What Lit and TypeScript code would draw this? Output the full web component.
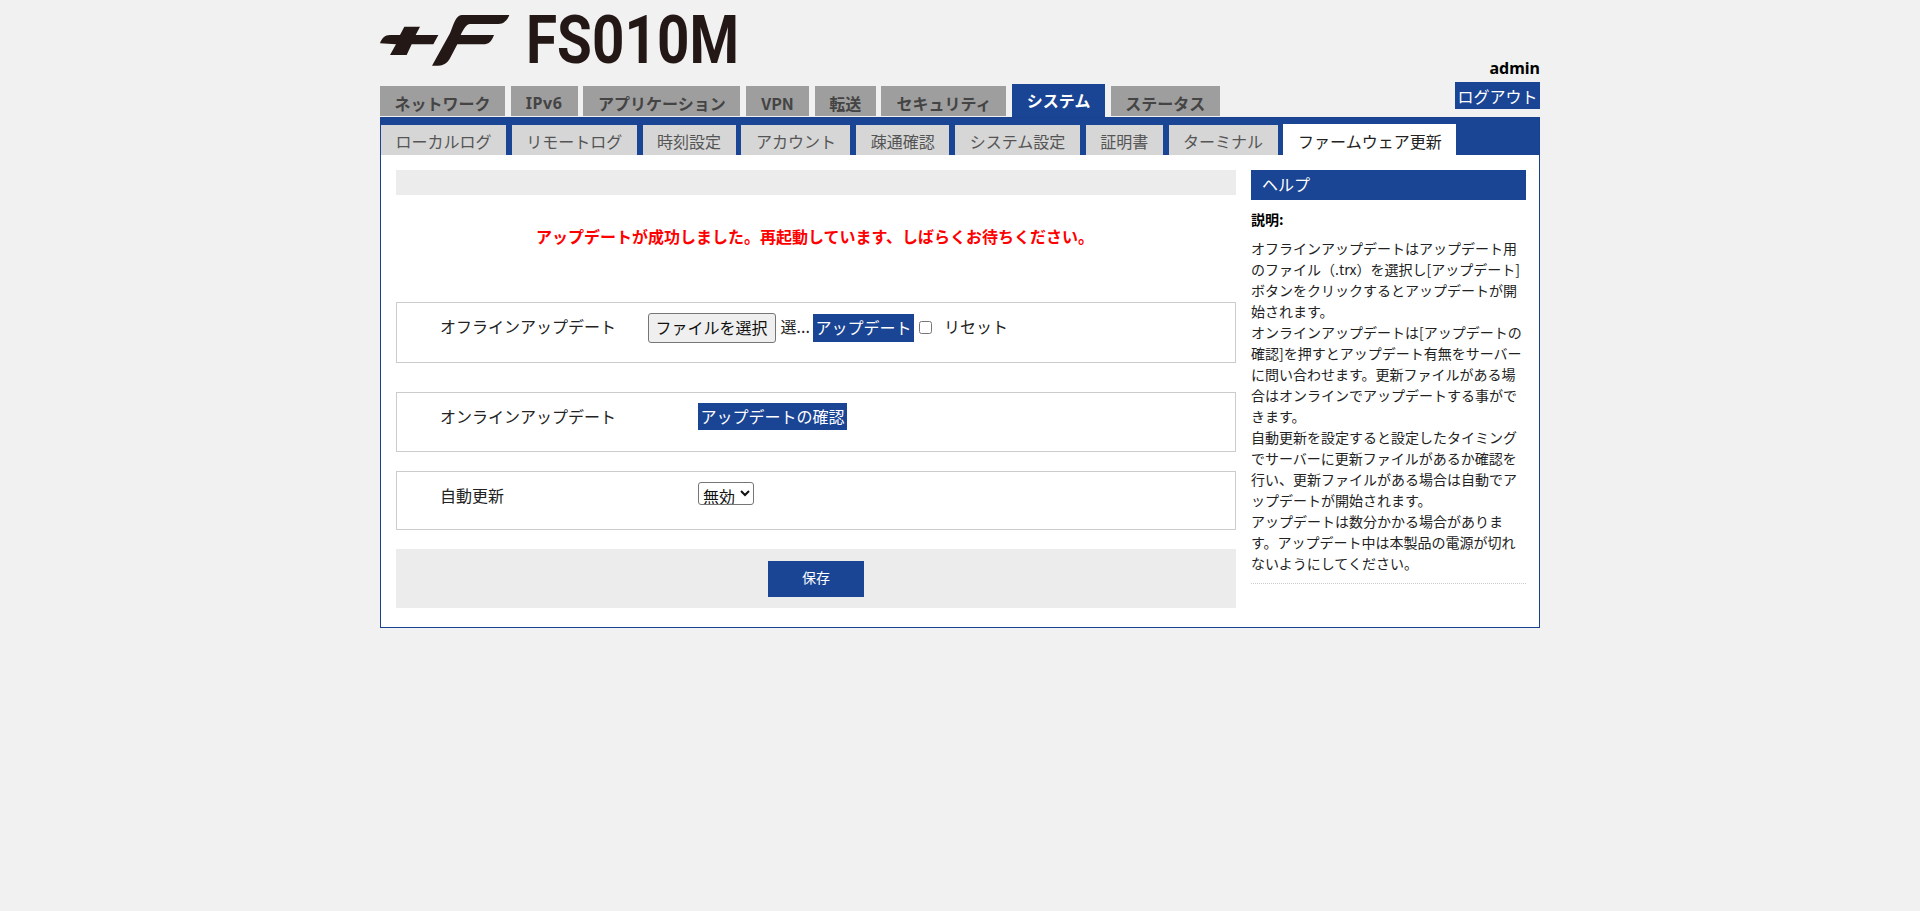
import { LitElement, html, css } from "lit";
import { customElement } from "lit/decorators.js";

const MAIN = [
  { t: "ネットワーク", w: 125 },
  { t: "IPv6", w: 67, latin: true },
  { t: "アプリケーション", w: 157 },
  { t: "VPN", w: 63 },
  { t: "転送", w: 61 },
  { t: "セキュリティ", w: 125 },
  { t: "システム", w: 93, active: true },
  { t: "ステータス", w: 109 },
];
const SUB = [
  { t: "ローカルログ", w: 125 },
  { t: "リモートログ", w: 125 },
  { t: "時刻設定", w: 93 },
  { t: "アカウント", w: 109 },
  { t: "疎通確認", w: 93 },
  { t: "システム設定", w: 125 },
  { t: "証明書", w: 77 },
  { t: "ターミナル", w: 109 },
  { t: "ファームウェア更新", w: 173, active: true },
];

@customElement("app-root")
export class AppRoot extends LitElement {
  static styles = css`
    :host {
      display: block;
      min-height: 911px;
      background: #f1f1f1;
      font-family: "Noto Sans CJK JP", "Noto Sans", sans-serif;
      font-size: 16px;
      color: #222;
    }
    * { box-sizing: border-box; }
    .page { width: 1160px; margin: 0 auto; }
    .top { display: flex; justify-content: space-between; align-items: flex-start; height: 117px; }
    .brand { height: 84px; }
    .logo { display: flex; align-items: flex-start; padding-top: 15px; height: 84px; }
    .logo svg { display: block; width: 130px; height: 52px; }
    .model {
      font-family: "Roboto", sans-serif;
      font-weight: 700;
      font-size: 67px;
      line-height: 49px;
      height: 49px;
      color: #231815;
      margin-left: 16px;
      transform: scaleX(0.845);
      transform-origin: left center;
      padding-top: 1px;
    }
    .user { display: flex; flex-direction: column; align-items: flex-end; padding-top: 57px; }
    .admin { font-family: "Noto Sans", sans-serif; font-weight: 700; font-size: 16px; line-height: 22px; color: #000; }
    .logout { height: 27px; width: 85px; margin-top: 3px; padding-bottom: 3px; }
    .btn {
      background: #1a4494;
      color: #fff;
      border: 0;
      padding: 0;
      font: inherit;
      display: inline-flex;
      align-items: center;
      justify-content: center;
      line-height: 1;
    }
    .main-tabs { display: flex; gap: 5.7px; align-items: flex-start; height: 33px; }
    .main-tab {
      height: 30px;
      margin-top: 2px;
      background: #9e9e9e;
      color: #444;
      font-weight: 700;
      display: flex;
      align-items: center;
      justify-content: center;
      padding-top: 3px;
    }
    .main-tab.latin { font-family: "Noto Sans", sans-serif; letter-spacing: 0.6px; }
    .main-tab.active { height: 33px; margin-top: 0; background: #1a4494; color: #fff; padding-top: 0; padding-bottom: 2px; }
    .panel { border: 1px solid #1a4090; background: #fff; height: 511px; }
    .sub-tabs { display: flex; gap: 5.8px; align-items: flex-end; height: 37px; background: #1a4494; }
    .sub-tab {
      height: 30px;
      background: #d6d6d6;
      color: #555;
      display: flex;
      align-items: center;
      justify-content: center;
      padding-top: 2px;
    }
    .sub-tab.active { height: 31px; background: #fff; color: #222; }
    .body { display: flex; padding: 15px 0 0 15px; gap: 15px; }
    .left { width: 840px; }
    .right { width: 275px; }
    .bar { height: 25px; background: #ececec; }
    .msg { color: #f00; font-weight: 700; text-align: center; line-height: 24px; margin-top: 29px; height: 78px; padding-right: 2px; }
    .box { border: 1px solid #ccc; height: 61px; padding: 10px 0 0 43px; display: flex; align-items: flex-start; }
    .box.online { margin-top: 29px; height: 60px; }
    .box.auto { margin-top: 19px; height: 59px; }
    .label { width: 207.5px; line-height: 26px; flex: none; }
    .box.online .label { width: 258px; }
    .box.auto .label { width: 258px; }
    .file {
      width: 128px;
      height: 30px;
      font: inherit;
      background: #efefef;
      color: #111;
      border: 1px solid #767676;
      border-radius: 3px;
      padding: 0 0 2px;
      line-height: 1;
    }
    .selected { margin-left: 5px; width: 32.5px; line-height: 27px; flex: none; }
    .upd { width: 101px; height: 28px; margin-top: 1px; padding-bottom: 2px; }
    .check { width: 13px; height: 13px; margin: 8px 0 0 5px; flex: none; }
    .reset { margin-left: 12px; line-height: 26px; }
    .confirm { width: 149px; height: 27px; padding-bottom: 2px; }
    select { width: 56px; height: 23px; font: inherit; background: #fff; color: #111; border: 1px solid #767676; border-radius: 3px; padding: 0; }
    .foot { height: 59px; margin-top: 19px; background: #ececec; display: flex; align-items: center; justify-content: center; }
    .save { width: 96px; height: 36px; font-size: 14px; padding-bottom: 3px; }
    .help-title { height: 30px; background: #1a4494; color: #fff; display: flex; align-items: center; padding: 0 0 2px 11px; }
    .help-h { font-weight: 700; font-size: 14px; color: #000; line-height: 21px; margin-top: 9px; }
    .help-text {
      font-size: 14px;
      line-height: 21px;
      margin-top: 8px;
      padding: 0 0 9px;
      border-bottom: 1px dotted #ccc;
      color: #222;
    }
  `;

  render() {
    return html`
      <div class="page">
        <div class="top">
          <div class="brand">
            <div class="logo">
              <svg viewBox="30 45 390 156" aria-label="+F">
                <path fill="#231815" d="M30 130C35 115 45 105 60 105L90 105L103 80L150 80L137 105L205 105L190 133L125 133L110 165L60 165L78 133Z" />
                <path fill="#231815" d="M275 45L418 45C412 62 400 72 385 72L300 72C290 72 282 85 272 105L372 105C365 125 355 133 340 133L262 133L240 175C232 190 220 197 205 197L186 197L240 100C250 75 258 45 275 45Z" />
              </svg>
              <div class="model">FS010M</div>
            </div>
            <div class="main-tabs">
              ${MAIN.map(
                (m) => html`<div class="main-tab ${m.latin ? "latin" : ""} ${m.active ? "active" : ""}" style="width:${m.w}px">${m.t}</div>`
              )}
            </div>
          </div>
          <div class="user">
            <div class="admin">admin</div>
            <button class="btn logout">ログアウト</button>
          </div>
        </div>
        <div class="panel">
          <div class="sub-tabs">
            ${SUB.map(
              (s) => html`<div class="sub-tab ${s.active ? "active" : ""}" style="width:${s.w}px">${s.t}</div>`
            )}
          </div>
          <div class="body">
            <div class="left">
              <div class="bar"></div>
              <div class="msg">アップデートが成功しました。再起動しています、しばらくお待ちください。</div>
              <div class="box">
                <div class="label">オフラインアップデート</div>
                <button class="file">ファイルを選択</button>
                <span class="selected">選...</span>
                <button class="btn upd">アップデート</button>
                <input class="check" type="checkbox" />
                <span class="reset">リセット</span>
              </div>
              <div class="box online">
                <div class="label">オンラインアップデート</div>
                <button class="btn confirm">アップデートの確認</button>
              </div>
              <div class="box auto">
                <div class="label">自動更新</div>
                <select><option>無効</option></select>
              </div>
              <div class="foot"><button class="btn save">保存</button></div>
            </div>
            <div class="right">
              <div class="help-title">ヘルプ</div>
              <div class="help-h">説明:</div>
              <div class="help-text">
                オフラインアップデートはアップデート用のファイル（.trx）を選択し[アップデート]ボタンをクリックするとアップデートが開始されます。<br />
                オンラインアップデートは[アップデートの確認]を押すとアップデート有無をサーバーに問い合わせます。更新ファイルがある場合はオンラインでアップデートする事ができます。<br />
                自動更新を設定すると設定したタイミングでサーバーに更新ファイルがあるか確認を行い、更新ファイルがある場合は自動でアップデートが開始されます。<br />
                アップデートは数分かかる場合があります。アップデート中は本製品の電源が切れないようにしてください。
              </div>
            </div>
          </div>
        </div>
      </div>
    `;
  }
}
